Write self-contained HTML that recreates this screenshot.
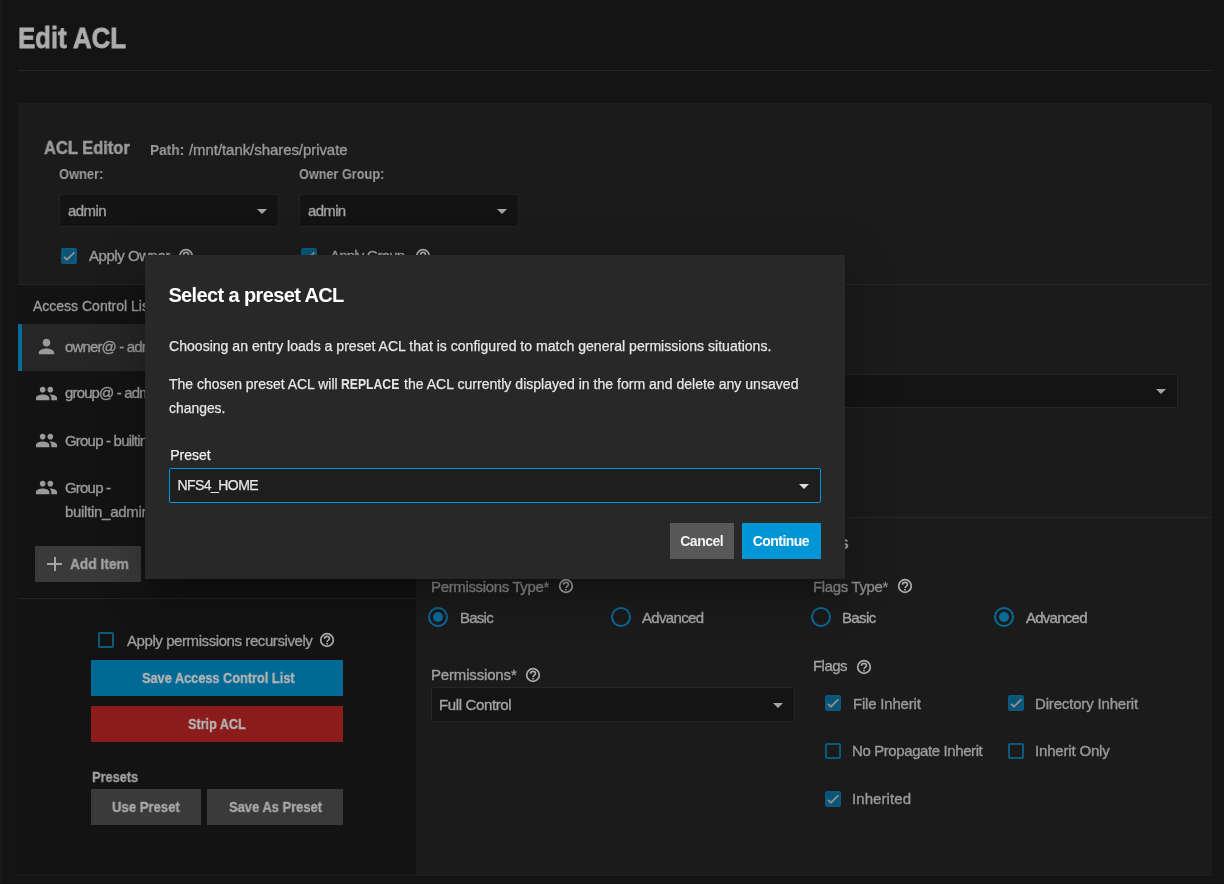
<!DOCTYPE html>
<html><head><meta charset="utf-8"><style>
html,body{margin:0;padding:0;}
body{width:1224px;height:884px;overflow:hidden;background:#141414;position:relative;font-family:"Liberation Sans", sans-serif;}
.t{position:absolute;white-space:nowrap;}
.g{will-change:transform;}
.r{position:absolute;}
#modal{position:absolute;left:145px;top:255px;width:700px;height:324px;background:#282828;
box-shadow:0 11px 15px -7px rgba(0,0,0,.2),0 24px 38px 3px rgba(0,0,0,.14),0 9px 46px 8px rgba(0,0,0,.12);}

</style></head><body>
<div class="r" style="left:0px;top:0px;width:3px;height:884px;background:#181818"></div><div class="r" style="left:18px;top:70px;width:1194px;height:1px;background:#262626"></div><div class="r" style="left:18px;top:103px;width:1194px;height:182px;background:#1b1b1b"></div><div class="r" style="left:59px;top:194px;width:220px;height:33px;box-sizing:border-box;background:#131313;border:1px solid #222;border-radius:2px"></div><svg class="r" style="left:257px;top:209px" width="10" height="5" viewBox="0 0 10 5"><path d="M0 0h10L5 5z" fill="#a5a5a5"/></svg><div class="r" style="left:299px;top:194px;width:220px;height:33px;box-sizing:border-box;background:#131313;border:1px solid #222;border-radius:2px"></div><svg class="r" style="left:497px;top:209px" width="10" height="5" viewBox="0 0 10 5"><path d="M0 0h10L5 5z" fill="#a5a5a5"/></svg><div class="r" style="left:61px;top:248px;width:16px;height:16px;box-sizing:border-box;border:2px solid #0b5a7e;border-radius:2px;background:#0a5577;"></div><svg class="r" style="left:61px;top:248px" width="16" height="16" viewBox="0 0 16 16"><path d="M3 8.8l2.9 2.9L13.4 4.3" fill="none" stroke="#909090" stroke-width="1.8"/></svg><svg class="r" style="left:177px;top:247px" width="18" height="18" viewBox="-9 -9 18 18"><circle cx="0" cy="0" r="6.3" fill="none" stroke="#a9a9a9" stroke-width="1.75"/><path d="M-2.45 -1.3C-2.45 -2.9 -1.3 -3.7 0 -3.7C1.4 -3.7 2.45 -2.85 2.45 -1.5C2.45 0.3 0 0.4 0 2.1" fill="none" stroke="#a9a9a9" stroke-width="1.7"/><rect x="-0.9" y="2.95" width="1.8" height="1.5" fill="#a9a9a9"/></svg><div class="r" style="left:301px;top:248px;width:16px;height:16px;box-sizing:border-box;border:2px solid #0b5a7e;border-radius:2px;background:#0a5577;"></div><svg class="r" style="left:301px;top:248px" width="16" height="16" viewBox="0 0 16 16"><path d="M3 8.8l2.9 2.9L13.4 4.3" fill="none" stroke="#909090" stroke-width="1.8"/></svg><svg class="r" style="left:414px;top:247px" width="18" height="18" viewBox="-9 -9 18 18"><circle cx="0" cy="0" r="6.3" fill="none" stroke="#a9a9a9" stroke-width="1.75"/><path d="M-2.45 -1.3C-2.45 -2.9 -1.3 -3.7 0 -3.7C1.4 -3.7 2.45 -2.85 2.45 -1.5C2.45 0.3 0 0.4 0 2.1" fill="none" stroke="#a9a9a9" stroke-width="1.7"/><rect x="-0.9" y="2.95" width="1.8" height="1.5" fill="#a9a9a9"/></svg><div class="r" style="left:18px;top:284px;width:1194px;height:1px;background:#262626"></div><div class="r" style="left:18px;top:285px;width:398px;height:590px;background:#131313"></div><div class="r" style="left:18px;top:324px;width:398px;height:47px;background:#262626"></div><div class="r" style="left:18px;top:324px;width:4px;height:47px;background:#0a6a99"></div><svg class="r" style="left:35px;top:335.2px" width="23" height="23" viewBox="0 0 24 24" fill="#9a9a9a"><path d="M12 12c2.21 0 4-1.79 4-4s-1.79-4-4-4-4 1.79-4 4 1.79 4 4 4zm0 2c-2.67 0-8 1.34-8 4v2h16v-2c0-2.66-5.33-4-8-4z"/></svg><svg class="r" style="left:35px;top:382.2px" width="23" height="23" viewBox="0 0 24 24" fill="#9a9a9a"><path d="M16 11c1.66 0 2.99-1.34 2.99-3S17.66 5 16 5c-1.66 0-3 1.34-3 3s1.34 3 3 3zm-8 0c1.66 0 2.99-1.34 2.99-3S9.66 5 8 5C6.34 5 5 6.34 5 8s1.34 3 3 3zm0 2c-2.33 0-7 1.17-7 3.5V19h14v-2.5c0-2.33-4.67-3.5-7-3.5zm8 0c-.29 0-.62.02-.97.05 1.16.84 1.97 1.97 1.97 3.45V19h6v-2.5c0-2.33-4.670-3.5-7-3.5z"/></svg><svg class="r" style="left:35px;top:429.2px" width="23" height="23" viewBox="0 0 24 24" fill="#9a9a9a"><path d="M16 11c1.66 0 2.99-1.34 2.99-3S17.66 5 16 5c-1.66 0-3 1.34-3 3s1.34 3 3 3zm-8 0c1.66 0 2.99-1.34 2.99-3S9.66 5 8 5C6.34 5 5 6.34 5 8s1.34 3 3 3zm0 2c-2.33 0-7 1.17-7 3.5V19h14v-2.5c0-2.33-4.67-3.5-7-3.5zm8 0c-.29 0-.62.02-.97.05 1.16.84 1.97 1.97 1.97 3.45V19h6v-2.5c0-2.33-4.670-3.5-7-3.5z"/></svg><svg class="r" style="left:35px;top:476.2px" width="23" height="23" viewBox="0 0 24 24" fill="#9a9a9a"><path d="M16 11c1.66 0 2.99-1.34 2.99-3S17.66 5 16 5c-1.66 0-3 1.34-3 3s1.34 3 3 3zm-8 0c1.66 0 2.99-1.34 2.99-3S9.66 5 8 5C6.34 5 5 6.34 5 8s1.34 3 3 3zm0 2c-2.33 0-7 1.17-7 3.5V19h14v-2.5c0-2.33-4.67-3.5-7-3.5zm8 0c-.29 0-.62.02-.97.05 1.16.84 1.97 1.97 1.97 3.45V19h6v-2.5c0-2.33-4.670-3.5-7-3.5z"/></svg><div class="r" style="left:35px;top:546px;width:106px;height:36px;background:#3a3a3a"></div><div class="r" style="left:47px;top:563px;width:15px;height:2px;background:#a5a5a5"></div><div class="r" style="left:54px;top:557px;width:2px;height:14px;background:#a5a5a5"></div><div class="r" style="left:18px;top:598px;width:398px;height:1px;background:#222"></div><div class="r" style="left:98px;top:632px;width:16px;height:16px;box-sizing:border-box;border:2px solid #0b5a7e;border-radius:2px;"></div><svg class="r" style="left:318px;top:631px" width="18" height="18" viewBox="-9 -9 18 18"><circle cx="0" cy="0" r="6.3" fill="none" stroke="#a9a9a9" stroke-width="1.75"/><path d="M-2.45 -1.3C-2.45 -2.9 -1.3 -3.7 0 -3.7C1.4 -3.7 2.45 -2.85 2.45 -1.5C2.45 0.3 0 0.4 0 2.1" fill="none" stroke="#a9a9a9" stroke-width="1.7"/><rect x="-0.9" y="2.95" width="1.8" height="1.5" fill="#a9a9a9"/></svg><div class="r" style="left:91px;top:660px;width:252px;height:36px;background:#006994"></div><div class="r" style="left:91px;top:706px;width:252px;height:36px;background:#8c1c1c"></div><div class="r" style="left:91px;top:789px;width:110px;height:36px;background:#3a3a3a"></div><div class="r" style="left:207px;top:789px;width:136px;height:36px;background:#3a3a3a"></div><div class="r" style="left:416px;top:285px;width:796px;height:590px;background:#1b1b1b"></div><div class="r" style="left:420px;top:374px;width:758px;height:34px;box-sizing:border-box;background:#141414;border:1px solid #262626;border-radius:2px"></div><svg class="r" style="left:1156px;top:389px" width="10" height="5" viewBox="0 0 10 5"><path d="M0 0h10L5 5z" fill="#a5a5a5"/></svg><div class="r" style="left:416px;top:517px;width:796px;height:1px;background:#262626"></div><svg class="r" style="left:556.5px;top:577px" width="18" height="18" viewBox="-9 -9 18 18"><circle cx="0" cy="0" r="6.3" fill="none" stroke="#a9a9a9" stroke-width="1.75"/><path d="M-2.45 -1.3C-2.45 -2.9 -1.3 -3.7 0 -3.7C1.4 -3.7 2.45 -2.85 2.45 -1.5C2.45 0.3 0 0.4 0 2.1" fill="none" stroke="#a9a9a9" stroke-width="1.7"/><rect x="-0.9" y="2.95" width="1.8" height="1.5" fill="#a9a9a9"/></svg><svg class="r" style="left:428px;top:607px" width="20" height="20" viewBox="0 0 20 20"><circle cx="10" cy="10" r="9" fill="none" stroke="#0a6a99" stroke-width="2"/><circle cx="10" cy="10" r="5" fill="#0a6a99"/></svg><svg class="r" style="left:611px;top:607px" width="20" height="20" viewBox="0 0 20 20"><circle cx="10" cy="10" r="9" fill="none" stroke="#0a6a99" stroke-width="2"/></svg><svg class="r" style="left:523.5px;top:665.5px" width="18" height="18" viewBox="-9 -9 18 18"><circle cx="0" cy="0" r="6.3" fill="none" stroke="#a9a9a9" stroke-width="1.75"/><path d="M-2.45 -1.3C-2.45 -2.9 -1.3 -3.7 0 -3.7C1.4 -3.7 2.45 -2.85 2.45 -1.5C2.45 0.3 0 0.4 0 2.1" fill="none" stroke="#a9a9a9" stroke-width="1.7"/><rect x="-0.9" y="2.95" width="1.8" height="1.5" fill="#a9a9a9"/></svg><div class="r" style="left:431px;top:687px;width:364px;height:35px;box-sizing:border-box;background:#141414;border:1px solid #262626;border-radius:2px"></div><svg class="r" style="left:773px;top:703px" width="10" height="5" viewBox="0 0 10 5"><path d="M0 0h10L5 5z" fill="#a5a5a5"/></svg><svg class="r" style="left:896px;top:577px" width="18" height="18" viewBox="-9 -9 18 18"><circle cx="0" cy="0" r="6.3" fill="none" stroke="#a9a9a9" stroke-width="1.75"/><path d="M-2.45 -1.3C-2.45 -2.9 -1.3 -3.7 0 -3.7C1.4 -3.7 2.45 -2.85 2.45 -1.5C2.45 0.3 0 0.4 0 2.1" fill="none" stroke="#a9a9a9" stroke-width="1.7"/><rect x="-0.9" y="2.95" width="1.8" height="1.5" fill="#a9a9a9"/></svg><svg class="r" style="left:811px;top:607px" width="20" height="20" viewBox="0 0 20 20"><circle cx="10" cy="10" r="9" fill="none" stroke="#0a6a99" stroke-width="2"/></svg><svg class="r" style="left:994px;top:607px" width="20" height="20" viewBox="0 0 20 20"><circle cx="10" cy="10" r="9" fill="none" stroke="#0a6a99" stroke-width="2"/><circle cx="10" cy="10" r="5" fill="#0a6a99"/></svg><svg class="r" style="left:855px;top:657.5px" width="18" height="18" viewBox="-9 -9 18 18"><circle cx="0" cy="0" r="6.3" fill="none" stroke="#a9a9a9" stroke-width="1.75"/><path d="M-2.45 -1.3C-2.45 -2.9 -1.3 -3.7 0 -3.7C1.4 -3.7 2.45 -2.85 2.45 -1.5C2.45 0.3 0 0.4 0 2.1" fill="none" stroke="#a9a9a9" stroke-width="1.7"/><rect x="-0.9" y="2.95" width="1.8" height="1.5" fill="#a9a9a9"/></svg><div class="r" style="left:825px;top:695px;width:16px;height:16px;box-sizing:border-box;border:2px solid #0b5a7e;border-radius:2px;background:#0a5577;"></div><svg class="r" style="left:825px;top:695px" width="16" height="16" viewBox="0 0 16 16"><path d="M3 8.8l2.9 2.9L13.4 4.3" fill="none" stroke="#909090" stroke-width="1.8"/></svg><div class="r" style="left:1008px;top:695px;width:16px;height:16px;box-sizing:border-box;border:2px solid #0b5a7e;border-radius:2px;background:#0a5577;"></div><svg class="r" style="left:1008px;top:695px" width="16" height="16" viewBox="0 0 16 16"><path d="M3 8.8l2.9 2.9L13.4 4.3" fill="none" stroke="#909090" stroke-width="1.8"/></svg><div class="r" style="left:825px;top:743px;width:16px;height:16px;box-sizing:border-box;border:2px solid #0b5a7e;border-radius:2px;"></div><div class="r" style="left:1008px;top:743px;width:16px;height:16px;box-sizing:border-box;border:2px solid #0b5a7e;border-radius:2px;"></div><div class="r" style="left:825px;top:791px;width:16px;height:16px;box-sizing:border-box;border:2px solid #0b5a7e;border-radius:2px;background:#0a5577;"></div><svg class="r" style="left:825px;top:791px" width="16" height="16" viewBox="0 0 16 16"><path d="M3 8.8l2.9 2.9L13.4 4.3" fill="none" stroke="#909090" stroke-width="1.8"/></svg><div class="r" style="left:18px;top:875px;width:1194px;height:1px;background:#1d1d1d"></div><div class="r" style="left:18px;top:876px;width:1194px;height:1px;background:#101010"></div><div class="t g" id="title" style="left:17.80px;top:23.65px;font-size:29px;line-height:29px;color:#adadad;font-weight:700;letter-spacing:0.000px;transform:scaleX(0.8899);transform-origin:0 0;-webkit-text-stroke:0.8px #adadad">Edit ACL</div><div class="t g" id="acled" style="left:44.00px;top:138.22px;font-size:19px;line-height:19px;color:#9a9a9a;font-weight:700;letter-spacing:0.000px;transform:scaleX(0.8679);transform-origin:0 0;-webkit-text-stroke:0.5px #9a9a9a">ACL Editor</div><div class="t g" id="path" style="left:149.50px;top:141.60px;font-size:15px;line-height:15px;color:#999999;font-weight:700;letter-spacing:0.000px;transform:scaleX(0.9145);transform-origin:0 0">Path:</div><div class="t g" id="pathv" style="left:189.00px;top:141.60px;font-size:15px;line-height:15px;color:#999999;font-weight:400;letter-spacing:-0.064px;-webkit-text-stroke:0.35px #999999">/mnt/tank/shares/private</div><div class="t g" id="owner" style="left:59.00px;top:167.45px;font-size:14px;line-height:14px;color:#9c9c9c;font-weight:700;letter-spacing:0.000px;transform:scaleX(0.9212);transform-origin:0 0">Owner:</div><div class="t g" id="ownerg" style="left:299.10px;top:167.35px;font-size:14px;line-height:14px;color:#9c9c9c;font-weight:700;letter-spacing:0.000px;transform:scaleX(0.9054);transform-origin:0 0">Owner Group:</div><div class="t g" id="adm1" style="left:67.70px;top:203.30px;font-size:15px;line-height:15px;color:#a0a0a0;font-weight:400;letter-spacing:-0.572px;-webkit-text-stroke:0.35px #a0a0a0">admin</div><div class="t g" id="adm2" style="left:308.00px;top:203.30px;font-size:15px;line-height:15px;color:#a0a0a0;font-weight:400;letter-spacing:-0.675px;-webkit-text-stroke:0.35px #a0a0a0">admin</div><div class="t g" id="apown" style="left:89.10px;top:247.50px;font-size:15px;line-height:15px;color:#9c9c9c;font-weight:400;letter-spacing:-0.450px;-webkit-text-stroke:0.35px #9c9c9c">Apply Owner</div><div class="t g" id="apgrp" style="left:330.20px;top:247.50px;font-size:15px;line-height:15px;color:#9c9c9c;font-weight:400;letter-spacing:-0.828px;-webkit-text-stroke:0.35px #9c9c9c">Apply Group</div><div class="t g" id="acl" style="left:33.00px;top:299.05px;font-size:14px;line-height:14px;color:#9a9a9a;font-weight:400;letter-spacing:0.000px;-webkit-text-stroke:0.35px #9a9a9a">Access Control List</div><div class="t g" id="it1" style="left:65.40px;top:339.00px;font-size:15px;line-height:15px;color:#9a9a9a;font-weight:400;letter-spacing:-0.850px;-webkit-text-stroke:0.35px #9a9a9a">owner@ - admin</div><div class="t g" id="it2" style="left:65.40px;top:385.30px;font-size:15px;line-height:15px;color:#9a9a9a;font-weight:400;letter-spacing:-0.850px;-webkit-text-stroke:0.35px #9a9a9a">group@ - admin</div><div class="t g" id="it3" style="left:65.40px;top:433.30px;font-size:15px;line-height:15px;color:#9a9a9a;font-weight:400;letter-spacing:-0.800px;-webkit-text-stroke:0.35px #9a9a9a">Group - builtin_users</div><div class="t g" id="it4a" style="left:65.40px;top:480.30px;font-size:15px;line-height:15px;color:#9a9a9a;font-weight:400;letter-spacing:-0.800px;-webkit-text-stroke:0.35px #9a9a9a">Group -</div><div class="t g" id="it4b" style="left:65.40px;top:504.30px;font-size:15px;line-height:15px;color:#9a9a9a;font-weight:400;letter-spacing:-0.300px;-webkit-text-stroke:0.35px #9a9a9a">builtin_admins</div><div class="t g" id="additem" style="left:70.00px;top:555.90px;font-size:15px;line-height:15px;color:#a5a5a5;font-weight:700;letter-spacing:0.000px;transform:scaleX(0.9161);transform-origin:0 0;-webkit-text-stroke:0.35px #a5a5a5">Add Item</div><div class="t g" id="apprec" style="left:126.50px;top:632.70px;font-size:15px;line-height:15px;color:#9c9c9c;font-weight:400;letter-spacing:-0.418px;-webkit-text-stroke:0.35px #9c9c9c">Apply permissions recursively</div><div class="t g" id="saveacl" style="left:142.30px;top:669.60px;font-size:15px;line-height:15px;color:#b4b4b4;font-weight:700;letter-spacing:0.000px;transform:scaleX(0.8500);transform-origin:0 0;-webkit-text-stroke:0.35px #b4b4b4">Save Access Control List</div><div class="t g" id="strip" style="left:188.00px;top:715.70px;font-size:15px;line-height:15px;color:#b4b4b4;font-weight:700;letter-spacing:0.000px;transform:scaleX(0.8419);transform-origin:0 0;-webkit-text-stroke:0.35px #b4b4b4">Strip ACL</div><div class="t g" id="presets" style="left:91.60px;top:768.80px;font-size:15px;line-height:15px;color:#a0a0a0;font-weight:700;letter-spacing:0.000px;transform:scaleX(0.8538);transform-origin:0 0;-webkit-text-stroke:0.35px #a0a0a0">Presets</div><div class="t g" id="usep" style="left:112.20px;top:798.70px;font-size:15px;line-height:15px;color:#a8a8a8;font-weight:700;letter-spacing:0.000px;transform:scaleX(0.8741);transform-origin:0 0;-webkit-text-stroke:0.35px #a8a8a8">Use Preset</div><div class="t g" id="savep" style="left:228.80px;top:798.70px;font-size:15px;line-height:15px;color:#a8a8a8;font-weight:700;letter-spacing:0.000px;transform:scaleX(0.8629);transform-origin:0 0;-webkit-text-stroke:0.35px #a8a8a8">Save As Preset</div><div class="t g" id="permsh" style="left:742.00px;top:533.76px;font-size:18px;line-height:18px;color:#aaaaaa;font-weight:700;letter-spacing:0.000px">Permissions</div><div class="t g" id="ptype" style="left:430.80px;top:578.80px;font-size:15px;line-height:15px;color:#8c8c8c;font-weight:400;letter-spacing:-0.350px;-webkit-text-stroke:0.35px #8c8c8c">Permissions Type*</div><div class="t g" id="pbasic" style="left:460.00px;top:609.80px;font-size:15px;line-height:15px;color:#a5a5a5;font-weight:400;letter-spacing:-0.752px;-webkit-text-stroke:0.35px #a5a5a5">Basic</div><div class="t g" id="padv" style="left:642.20px;top:609.80px;font-size:15px;line-height:15px;color:#a5a5a5;font-weight:400;letter-spacing:-0.674px;-webkit-text-stroke:0.35px #a5a5a5">Advanced</div><div class="t g" id="perms" style="left:431.30px;top:667.00px;font-size:15px;line-height:15px;color:#a0a0a0;font-weight:400;letter-spacing:-0.164px;-webkit-text-stroke:0.35px #a0a0a0">Permissions*</div><div class="t g" id="full" style="left:438.90px;top:696.90px;font-size:15px;line-height:15px;color:#a5a5a5;font-weight:400;letter-spacing:-0.365px;-webkit-text-stroke:0.35px #a5a5a5">Full Control</div><div class="t g" id="ftype" style="left:813.40px;top:579.30px;font-size:15px;line-height:15px;color:#8c8c8c;font-weight:400;letter-spacing:-0.360px;-webkit-text-stroke:0.35px #8c8c8c">Flags Type*</div><div class="t g" id="fbasic" style="left:842.20px;top:609.80px;font-size:15px;line-height:15px;color:#a5a5a5;font-weight:400;letter-spacing:-0.630px;-webkit-text-stroke:0.35px #a5a5a5">Basic</div><div class="t g" id="fadv" style="left:1025.60px;top:609.80px;font-size:15px;line-height:15px;color:#a5a5a5;font-weight:400;letter-spacing:-0.741px;-webkit-text-stroke:0.35px #a5a5a5">Advanced</div><div class="t g" id="flags" style="left:813.40px;top:658.30px;font-size:15px;line-height:15px;color:#a0a0a0;font-weight:400;letter-spacing:-0.540px;-webkit-text-stroke:0.35px #a0a0a0">Flags</div><div class="t g" id="f1" style="left:853.00px;top:695.60px;font-size:15px;line-height:15px;color:#9a9a9a;font-weight:400;letter-spacing:-0.202px;-webkit-text-stroke:0.35px #9a9a9a">File Inherit</div><div class="t g" id="f2" style="left:1035.00px;top:695.60px;font-size:15px;line-height:15px;color:#9a9a9a;font-weight:400;letter-spacing:-0.169px;-webkit-text-stroke:0.35px #9a9a9a">Directory Inherit</div><div class="t g" id="f3" style="left:852.20px;top:743.30px;font-size:15px;line-height:15px;color:#9a9a9a;font-weight:400;letter-spacing:-0.402px;-webkit-text-stroke:0.35px #9a9a9a">No Propagate Inherit</div><div class="t g" id="f4" style="left:1034.90px;top:743.30px;font-size:15px;line-height:15px;color:#9a9a9a;font-weight:400;letter-spacing:-0.176px;-webkit-text-stroke:0.35px #9a9a9a">Inherit Only</div><div class="t g" id="f5" style="left:852.20px;top:791.30px;font-size:15px;line-height:15px;color:#9a9a9a;font-weight:400;letter-spacing:0.081px;-webkit-text-stroke:0.35px #9a9a9a">Inherited</div><div id="modal"></div><div class="r" style="left:169px;top:468px;width:652px;height:35px;box-sizing:border-box;background:#1e1e1e;border:1px solid #0095d5;border-radius:2px"></div><svg class="r" style="left:799px;top:484px" width="10" height="5" viewBox="0 0 10 5"><path d="M0 0h10L5 5z" fill="#dddddd"/></svg><div class="r" style="left:670px;top:523px;width:64px;height:36px;background:#585858"></div><div class="r" style="left:742px;top:523px;width:79px;height:36px;background:#0095d5"></div><div class="t" id="mtitle" style="left:168.40px;top:285.07px;font-size:20px;line-height:20px;color:#ffffff;font-weight:700;letter-spacing:-0.620px">Select a preset ACL</div><div class="t" id="m1" style="left:169.40px;top:338.10px;font-size:15px;line-height:15px;color:#e6e6e6;font-weight:400;letter-spacing:0.000px;transform:scaleX(0.9378);transform-origin:0 0;-webkit-text-stroke:0.25px #e6e6e6">Choosing an entry loads a preset ACL that is configured to match general permissions situations.</div><div class="t" id="m2a" style="left:169.40px;top:376.30px;font-size:15px;line-height:15px;color:#e6e6e6;font-weight:400;letter-spacing:0.000px;transform:scaleX(0.9304);transform-origin:0 0;-webkit-text-stroke:0.25px #e6e6e6">The chosen preset ACL will</div><div class="t" id="m2b" style="left:341.40px;top:376.30px;font-size:15px;line-height:15px;color:#e6e6e6;font-weight:700;letter-spacing:0.000px;transform:scaleX(0.8129);transform-origin:0 0">REPLACE</div><div class="t" id="m2c" style="left:403.50px;top:376.30px;font-size:15px;line-height:15px;color:#e6e6e6;font-weight:400;letter-spacing:0.000px;transform:scaleX(0.9380);transform-origin:0 0;-webkit-text-stroke:0.25px #e6e6e6">the ACL currently displayed in the form and delete any unsaved</div><div class="t" id="m3" style="left:169.40px;top:399.60px;font-size:15px;line-height:15px;color:#e6e6e6;font-weight:400;letter-spacing:0.000px;transform:scaleX(0.9270);transform-origin:0 0;-webkit-text-stroke:0.25px #e6e6e6">changes.</div><div class="t" id="preset" style="left:170.20px;top:448.15px;font-size:14px;line-height:14px;color:#f0f0f0;font-weight:400;letter-spacing:0.000px;-webkit-text-stroke:0.25px #f0f0f0">Preset</div><div class="t" id="nfs" style="left:177.50px;top:477.95px;font-size:14px;line-height:14px;color:#e6e6e6;font-weight:400;letter-spacing:-0.563px;-webkit-text-stroke:0.25px #e6e6e6">NFS4_HOME</div><div class="t" id="cancel" style="left:680.20px;top:534.15px;font-size:14px;line-height:14px;color:#f2f2f2;font-weight:700;letter-spacing:-0.468px">Cancel</div><div class="t" id="cont" style="left:752.80px;top:534.15px;font-size:14px;line-height:14px;color:#ffffff;font-weight:700;letter-spacing:-0.561px">Continue</div>
</body></html>
